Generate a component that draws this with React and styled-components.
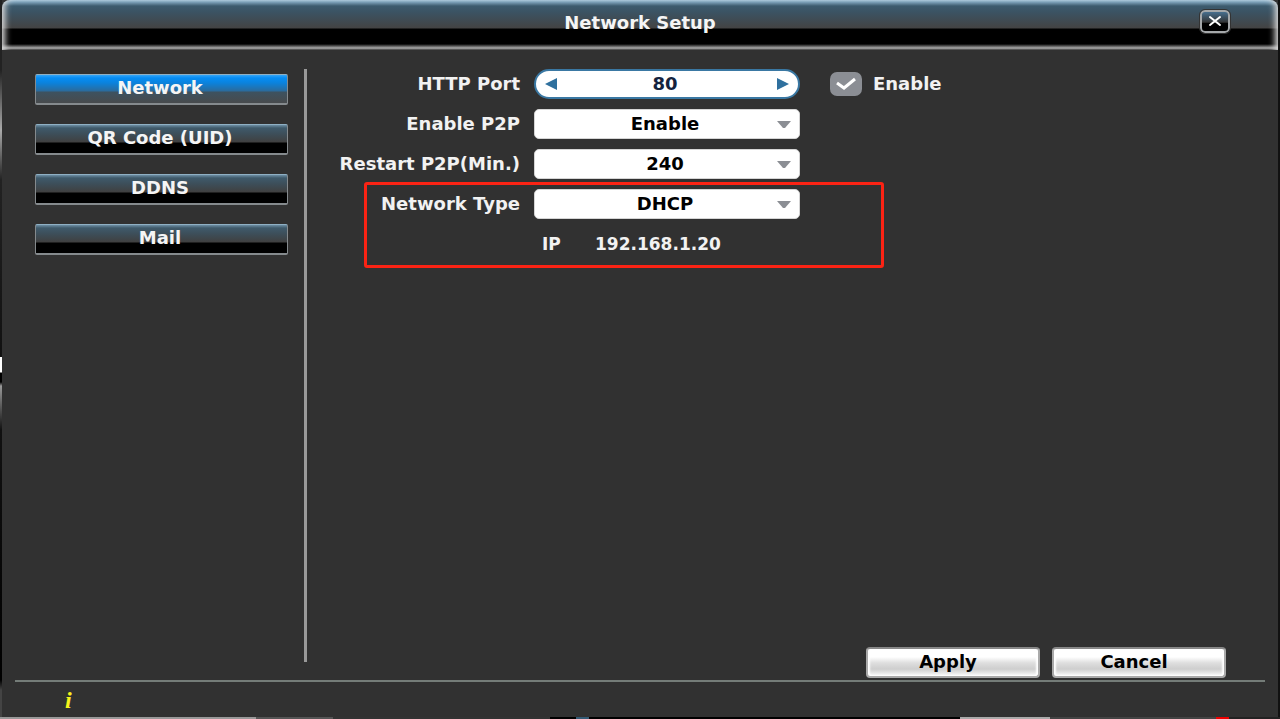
import { useState } from "react";
import styled, { createGlobalStyle } from "styled-components";

const GlobalStyle = createGlobalStyle`
  *, *::after{
    box-sizing: border-box;
  }
  body{
    margin: 0;
    background: #000;
  }
  body, button, input, select{
    font-family: "DejaVu Sans", Verdana, sans-serif;
    font-size: 18px;
    font-weight: bold;
    line-height: 20px;
  }
`;

const Desktop = styled.div`
  min-height: 100vh;
  padding: 0 2px 2px;
  display: flex;
  background:
    linear-gradient(to right, #999 0 20%, #555 20% 26%, #333 26% 43%, #000 43% 45%, #345a75 45% 46%, #000 46% 75%, #aaa 75% 82%, #444 82% 95%, #e00 95% 96%, #222 96%) bottom / 100% 2px no-repeat,
    linear-gradient(#222 0, #222 70px, #aaa 130px, #222 180px, #111 357px, #fff 357px, #fff 372px, #000 373px, #000 382px, #999 386px, #111 430px, #000 680px, #444 690px) left / 2px 100% no-repeat,
    #111;
`;

const Window = styled.div`
  flex: 1;
  display: flex;
  flex-direction: column;
  background: #313131;
`;

const TitleBar = styled.header`
  height: 50px;
  flex-shrink: 0;
  padding: 0 48px 4px;
  display: grid;
  grid-template-columns: 1fr auto 1fr;
  align-items: center;
  border-radius: 8px 8px 0 0;
  background: linear-gradient(#a9c8dc 0, #7fa3bb 2px, #3d5b6e 6px, #3b5363 12px, #434343 28px, #000 29px, #000 44px, #555 46px, #aaa 48px, #777 49px, #222 50px);
  box-shadow: inset 8px 0 6px -5px #ddd, inset -8px 0 6px -5px #ddd;
`;

const Title = styled.h1`
  grid-column: 2;
  margin: 0;
  font-size: 18px;
  line-height: 20px;
  color: #f5f5f5;
`;

const CloseButton = styled.button`
  justify-self: end;
  width: 30px;
  height: 23px;
  margin-bottom: 4px;
  padding: 0;
  display: flex;
  align-items: center;
  justify-content: center;
  border: 2px solid #a5a8aa;
  border-radius: 5px;
  outline: 1px solid #333;
  background: linear-gradient(#476f8e, #333 55%, #000 56%);
  color: #fff;
`;

const Body = styled.div`
  flex: 1;
  display: flex;
  padding: 19px 52px 2px 33px;
`;

const Menu = styled.nav`
  width: 253px;
  flex-shrink: 0;
  margin-right: 16px;
  padding-top: 5px;
  display: flex;
  flex-direction: column;
  gap: 19px;
`;

const MenuButton = styled.button`
  height: 31px;
  padding: 0 3px 2px 0;
  border: 1px solid #858a8d;
  border-top-color: #8fb0c4;
  border-bottom-width: 2px;
  border-radius: 2px;
  color: #f5f5f5;
  background: ${props => props.$active
    ? "linear-gradient(#35a5f5 0, #058df5 3px, #0b82dc 8px, #2b6b9c 16px, #3d5260 17px, #474b4e 27px)"
    : "linear-gradient(#6d8ea3 0, #3f5a6b 3px, #3d4e59 9px, #404040 17px, #000 18px)"};
`;

const Divider = styled.div`
  width: 3px;
  flex-shrink: 0;
  margin-bottom: 16px;
  background: #999;
`;

const Content = styled.main`
  flex: 1;
  display: flex;
  flex-direction: column;
  justify-content: space-between;
`;

const Form = styled.form`
  display: flex;
  flex-direction: column;
  gap: 10px;
`;

const Row = styled.div`
  display: flex;
  align-items: center;
  height: 30px;
`;

const Label = styled.label`
  width: 227px;
  padding-right: 14px;
  text-align: right;
  white-space: nowrap;
  color: #f2f2f2;
`;

const Spinner = styled.div`
  width: 266px;
  height: 30px;
  padding: 0 8px;
  display: flex;
  align-items: center;
  border: 2px solid #3a78a3;
  border-radius: 15px;
  background: #fff;
  input{
    flex: 1;
    min-width: 0;
    padding: 0 4px 0 0;
    border: 0;
    outline: 0;
    background: transparent;
    text-align: center;
    color: #15233d;
  }
`;

const ArrowButton = styled.button`
  width: 14px;
  height: 20px;
  padding: 0;
  display: flex;
  align-items: center;
  justify-content: center;
  border: 0;
  background: transparent;
  color: #2f709e;
`;

const SelectBox = styled.div`
  position: relative;
  width: 266px;
  select{
    display: block;
    width: 100%;
    height: 30px;
    padding: 0 4px 0 0;
    appearance: none;
    border: 1px solid #d5d5d5;
    border-radius: 5px;
    background: #fff;
    text-align: center;
    text-align-last: center;
    color: #000;
  }
  svg{
    position: absolute;
    right: 9px;
    top: 12px;
    pointer-events: none;
  }
`;

const CheckLabel = styled.label`
  margin-left: 30px;
  display: flex;
  align-items: center;
  gap: 11px;
  color: #f2f2f2;
`;

const CheckBox = styled.div`
  position: relative;
  width: 32px;
  height: 24px;
  input{
    display: block;
    width: 32px;
    height: 24px;
    margin: 0;
    appearance: none;
    border-radius: 7px;
    background: #8b8e94;
  }
  svg{
    position: absolute;
    left: 6px;
    top: 5px;
    pointer-events: none;
  }
`;

const Highlight = styled.div`
  position: relative;
  display: flex;
  flex-direction: column;
  gap: 10px;
  &::after{
    content: "";
    position: absolute;
    top: -7px;
    bottom: -9px;
    left: 57px;
    width: 520px;
    border: 3px solid #fb2314;
    border-radius: 3px;
    pointer-events: none;
  }
`;

const Address = styled.dl`
  margin: 0 0 0 235px;
  display: flex;
  font-size: 17px;
  color: #f2f2f2;
  dt{
    width: 53px;
  }
  dd{
    margin: 0;
  }
`;

const Actions = styled.div`
  display: flex;
  justify-content: flex-end;
  gap: 12px;
`;

const ActionButton = styled.button`
  width: 174px;
  height: 31px;
  padding: 0 10px 2px 0;
  border: 2px solid #aaa;
  border-top-color: #888;
  border-radius: 4px;
  background: linear-gradient(#fff 0, #fff 8px, #dedede 14px, #cecece 20px, #e8e8e8 24px, #fff 27px);
  box-shadow: inset 2px 0 2px #fff, inset -2px 0 2px #fff;
  color: #000;
`;

const StatusBar = styled.footer`
  height: 37px;
  margin: 0 13px;
  padding: 6px 0 0 50px;
  border-top: 2px solid #747c78;
  font-family: "Liberation Serif", serif;
  font-size: 24px;
  line-height: 24px;
  font-style: italic;
  color: #f7f21c;
`;

function SelectField({ id, label, options }) {
  return (
    <Row>
      <Label htmlFor={id}>{label}</Label>
      <SelectBox>
        <select id={id}>
          {options.map(option => (
            <option key={option}>{option}</option>
          ))}
        </select>
        <svg width="14" height="8" viewBox="0 0 14 8"><path d="M0 0H14L8 7H6Z" fill="#8b8e94"/></svg>
      </SelectBox>
    </Row>
  );
}

const pages = ["Network", "QR Code (UID)", "DDNS", "Mail"];

export default function App() {
  const [page, setPage] = useState("Network");
  const [port, setPort] = useState(80);
  const [enabled, setEnabled] = useState(true);

  return (
    <>
      <GlobalStyle />
      <Desktop>
        <Window>
          <TitleBar>
            <Title>Network Setup</Title>
            <CloseButton aria-label="Close">
              <svg width="14" height="12" viewBox="0 0 14 12" fill="none" stroke="currentColor" strokeWidth="2" strokeLinecap="round">
                <path d="M2 2L12 10M12 2L2 10"/>
              </svg>
            </CloseButton>
          </TitleBar>
          <Body>
            <Menu>
              {pages.map(name => (
                <MenuButton key={name} $active={name === page} onClick={() => setPage(name)}>
                  {name}
                </MenuButton>
              ))}
            </Menu>
            <Divider />
            <Content>
              <Form onSubmit={ev => ev.preventDefault()}>
                <Row>
                  <Label htmlFor="port">HTTP Port</Label>
                  <Spinner>
                    <ArrowButton type="button" aria-label="Decrease" onClick={() => setPort(port - 1)}>
                      <svg width="12" height="12" viewBox="0 0 12 12"><path d="M0 6L12 0V12Z" fill="currentColor"/></svg>
                    </ArrowButton>
                    <input id="port" value={port} onChange={ev => setPort(Number(ev.target.value) || 0)} />
                    <ArrowButton type="button" aria-label="Increase" onClick={() => setPort(port + 1)}>
                      <svg width="12" height="12" viewBox="0 0 12 12"><path d="M12 6L0 0V12Z" fill="currentColor"/></svg>
                    </ArrowButton>
                  </Spinner>
                  <CheckLabel>
                    <CheckBox>
                      <input type="checkbox" checked={enabled} onChange={ev => setEnabled(ev.target.checked)} />
                      {enabled && (
                        <svg width="20" height="14" viewBox="0 0 20 14" fill="none" stroke="#fff" strokeWidth="3">
                          <path d="M1 6L8 11L19 2"/>
                        </svg>
                      )}
                    </CheckBox>
                    <span>Enable</span>
                  </CheckLabel>
                </Row>
                <SelectField id="p2p" label="Enable P2P" options={["Enable", "Disable"]} />
                <SelectField id="restart" label="Restart P2P(Min.)" options={["240", "480"]} />
                <Highlight>
                  <SelectField id="type" label="Network Type" options={["DHCP", "Static"]} />
                  <Row>
                    <Address>
                      <dt>IP</dt>
                      <dd>192.168.1.20</dd>
                    </Address>
                  </Row>
                </Highlight>
              </Form>
              <Actions>
                <ActionButton>Apply</ActionButton>
                <ActionButton>Cancel</ActionButton>
              </Actions>
            </Content>
          </Body>
          <StatusBar>i</StatusBar>
        </Window>
      </Desktop>
    </>
  );
}
